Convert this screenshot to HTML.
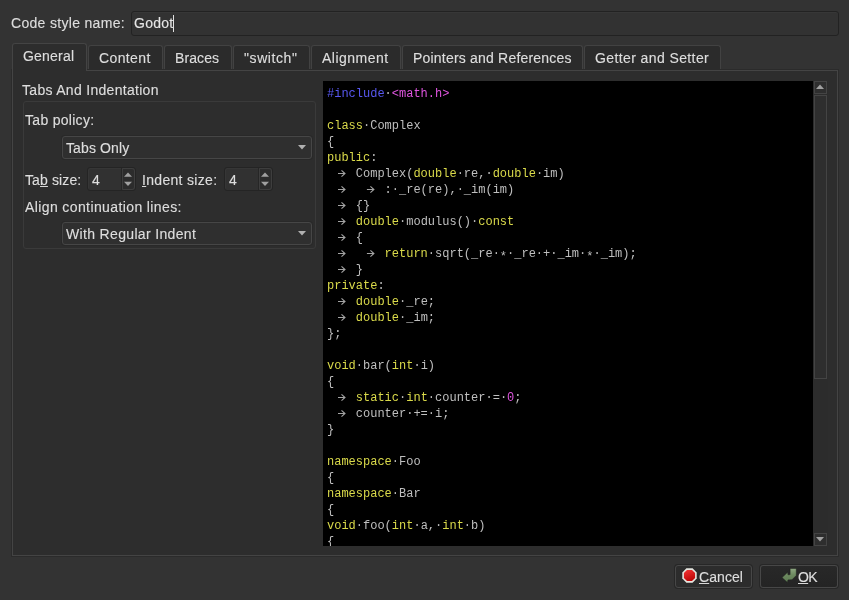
<!DOCTYPE html>
<html><head><meta charset="utf-8">
<style>
html,body{margin:0;padding:0;}
body{width:849px;height:600px;background:#333333;position:relative;overflow:hidden;font-family:"Liberation Sans",sans-serif;font-size:14px;color:#dedede;}
.a{position:absolute;}
.t{position:absolute;white-space:pre;line-height:16px;will-change:transform;-webkit-text-stroke:0.15px #d8d8d8;}
.box{position:absolute;box-sizing:border-box;}
.tab{position:absolute;box-sizing:border-box;top:45px;height:24px;border:1px solid #424242;border-bottom:none;border-radius:3px 3px 0 0;background:#2b2b2b;}
.code{position:absolute;left:327px;top:86px;font-family:"Liberation Mono",monospace;font-size:12px;line-height:16px;white-space:pre;color:#bfbfbf;will-change:transform;}
.k{color:#dada4a;}
.p{color:#5858f0;}
.m{color:#e055e0;}
.d{color:#b8b8b8;}
.ar{color:#a8a8a8;}
.st{position:relative;top:3px;}
u{text-decoration:underline;text-decoration-thickness:1px;text-underline-offset:1px;}
</style></head>
<body>
<div class="t" style="left:11px;top:15.30px;letter-spacing:0.314px;">Code style name:</div>
<div class="box" style="left:131px;top:11px;width:708px;height:25px;border:1px solid #222222;border-radius:3px;background:#323232;box-shadow:inset 0 1px 0 #373737;"></div>
<div class="t" style="left:134px;top:15.30px;letter-spacing:0.238px;color:#e6e6e6;">Godot</div>
<div class="a" style="left:173px;top:15px;width:1px;height:17px;background:#e0e0e0;"></div>
<div class="box" style="left:12px;top:70px;width:826px;height:486px;border:1px solid #444444;background:#2d2d2d;box-shadow:0 0 0 1px #2b2b2b;"></div>
<div class="tab" style="left:88px;width:75px;"></div>
<div class="t" style="left:99px;top:49.80px;letter-spacing:0.381px;">Content</div>
<div class="tab" style="left:164px;width:68px;"></div>
<div class="t" style="left:175px;top:49.80px;letter-spacing:0.096px;">Braces</div>
<div class="tab" style="left:233px;width:77px;"></div>
<div class="t" style="left:244px;top:49.80px;letter-spacing:0.578px;">&quot;switch&quot;</div>
<div class="tab" style="left:311px;width:90px;"></div>
<div class="t" style="left:322px;top:49.80px;letter-spacing:0.483px;">Alignment</div>
<div class="tab" style="left:402px;width:181px;"></div>
<div class="t" style="left:413px;top:49.80px;letter-spacing:0.200px;">Pointers and References</div>
<div class="tab" style="left:584px;width:137px;"></div>
<div class="t" style="left:595px;top:49.80px;letter-spacing:0.396px;">Getter and Setter</div>
<div class="box" style="left:12px;top:43px;width:75px;height:28px;border:1px solid #444444;border-bottom:none;border-radius:3px 3px 0 0;background:#2d2d2d;"></div>
<div class="t" style="left:23px;top:48.30px;letter-spacing:0.204px;">General</div>
<div class="t" style="left:22px;top:81.80px;letter-spacing:0.301px;">Tabs And Indentation</div>
<div class="box" style="left:23px;top:101px;width:293px;height:148px;border:1px solid #3a3a3a;border-radius:3px;"></div>
<div class="t" style="left:25px;top:112.30px;letter-spacing:0.295px;">Tab policy:</div>
<div class="box" style="left:62px;top:136px;width:250px;height:23px;border:1px solid #464646;border-radius:3px;background:#2f2f2f;box-shadow:0 0 0 1px #292929;"></div>
<div class="t" style="left:66px;top:139.90px;letter-spacing:0.116px;">Tabs Only</div>
<svg class="a" style="left:297px;top:144px;" width="10" height="7"><polygon points="1,1 9,1 5,5.6" fill="#b0b0b0"/></svg>
<div class="box" style="left:62px;top:222px;width:250px;height:23px;border:1px solid #464646;border-radius:3px;background:#2f2f2f;box-shadow:0 0 0 1px #292929;"></div>
<div class="t" style="left:66px;top:225.90px;letter-spacing:0.339px;">With Regular Indent</div>
<svg class="a" style="left:297px;top:230px;" width="10" height="7"><polygon points="1,1 9,1 5,5.6" fill="#b0b0b0"/></svg>
<div class="t" style="left:25px;top:171.70px;letter-spacing:0.120px;">Ta<u>b</u> size:</div>
<div class="t" style="left:142px;top:171.70px;letter-spacing:0.315px;"><u>I</u>ndent size:</div>
<div class="t" style="left:25px;top:199.30px;letter-spacing:0.391px;">Align continuation lines:</div>
<div class="box" style="left:87px;top:167px;width:49px;height:24px;border:1px solid #242424;border-radius:3px;background:#313131;box-shadow:inset 1px 1px 0 #363636;"></div>
<div class="box" style="left:121px;top:168px;width:1px;height:22px;background:#262626;"></div>
<div class="box" style="left:122px;top:168px;width:13px;height:22px;border:1px solid #3e3e3e;border-radius:0 3px 3px 0;background:#2c2c2c;"></div>
<svg class="a" style="left:124px;top:172px;" width="9" height="14"><polygon points="0,4.8 8,4.8 4,0.6" fill="#a0a0a0"/><polygon points="0,9.8 8,9.8 4,14" fill="#a0a0a0"/></svg>
<div class="t" style="left:92px;top:171.70px;letter-spacing:0.485px;">4</div>
<div class="box" style="left:224px;top:167px;width:49px;height:24px;border:1px solid #242424;border-radius:3px;background:#313131;box-shadow:inset 1px 1px 0 #363636;"></div>
<div class="box" style="left:258px;top:168px;width:1px;height:22px;background:#262626;"></div>
<div class="box" style="left:259px;top:168px;width:13px;height:22px;border:1px solid #3e3e3e;border-radius:0 3px 3px 0;background:#2c2c2c;"></div>
<svg class="a" style="left:261px;top:172px;" width="9" height="14"><polygon points="0,4.8 8,4.8 4,0.6" fill="#a0a0a0"/><polygon points="0,9.8 8,9.8 4,14" fill="#a0a0a0"/></svg>
<div class="t" style="left:229px;top:171.70px;letter-spacing:0.485px;">4</div>
<div class="box" style="left:323px;top:81px;width:490px;height:465px;background:#000;"></div>
<div class="box" style="left:323px;top:81px;width:490px;height:465px;overflow:hidden;"><div class="code" style="left:4px;top:5px;"><span class="p">#include</span><span class="d">·</span><span class="m">&lt;math.h&gt;</span>

<span class="k">class</span><span class="d">·</span>Complex
{
<span class="k">public</span>:
    Complex(<span class="k">double</span><span class="d">·</span>re,<span class="d">·</span><span class="k">double</span><span class="d">·</span>im)
        :<span class="d">·</span>_re(re),<span class="d">·</span>_im(im)
    {}
    <span class="k">double</span><span class="d">·</span>modulus()<span class="d">·</span><span class="k">const</span>
    {
        <span class="k">return</span><span class="d">·</span>sqrt(_re<span class="d">·</span><span class="st">*</span><span class="d">·</span>_re<span class="d">·</span>+<span class="d">·</span>_im<span class="d">·</span><span class="st">*</span><span class="d">·</span>_im);
    }
<span class="k">private</span>:
    <span class="k">double</span><span class="d">·</span>_re;
    <span class="k">double</span><span class="d">·</span>_im;
};

<span class="k">void</span><span class="d">·</span>bar(<span class="k">int</span><span class="d">·</span>i)
{
    <span class="k">static</span><span class="d">·</span><span class="k">int</span><span class="d">·</span>counter<span class="d">·</span>=<span class="d">·</span><span class="m">0</span>;
    counter<span class="d">·</span>+=<span class="d">·</span>i;
}

<span class="k">namespace</span><span class="d">·</span>Foo
{
<span class="k">namespace</span><span class="d">·</span>Bar
{
<span class="k">void</span><span class="d">·</span>foo(<span class="k">int</span><span class="d">·</span>a,<span class="d">·</span><span class="k">int</span><span class="d">·</span>b)
{
</div></div>
<svg class="a" style="left:0;top:0;" width="849" height="600"><path d="M338.0,173.5 H345.0 M341.5,170.3 L345.0,173.5 L341.5,176.7 M338.0,189.5 H345.0 M341.5,186.3 L345.0,189.5 L341.5,192.7 M366.9,189.5 H373.9 M370.4,186.3 L373.9,189.5 L370.4,192.7 M338.0,205.5 H345.0 M341.5,202.3 L345.0,205.5 L341.5,208.7 M338.0,221.5 H345.0 M341.5,218.3 L345.0,221.5 L341.5,224.7 M338.0,237.5 H345.0 M341.5,234.3 L345.0,237.5 L341.5,240.7 M338.0,253.5 H345.0 M341.5,250.3 L345.0,253.5 L341.5,256.7 M366.9,253.5 H373.9 M370.4,250.3 L373.9,253.5 L370.4,256.7 M338.0,269.5 H345.0 M341.5,266.3 L345.0,269.5 L341.5,272.7 M338.0,301.5 H345.0 M341.5,298.3 L345.0,301.5 L341.5,304.7 M338.0,317.5 H345.0 M341.5,314.3 L345.0,317.5 L341.5,320.7 M338.0,397.5 H345.0 M341.5,394.3 L345.0,397.5 L341.5,400.7 M338.0,413.5 H345.0 M341.5,410.3 L345.0,413.5 L341.5,416.7" stroke="#a4a4a4" stroke-width="1.1" fill="none"/></svg>
<div class="box" style="left:813px;top:81px;width:15px;height:465px;background:#2c2c2c;"></div>
<div class="box" style="left:814px;top:81px;width:13px;height:13px;border:1px solid #444;background:#2e2e2e;"></div>
<svg class="a" style="left:816px;top:84px;" width="9" height="6"><polygon points="0,5 8,5 4,0.5" fill="#a0a0a0"/></svg>
<div class="box" style="left:814px;top:95px;width:13px;height:284px;border:1px solid #444;background:#2e2e2e;"></div>
<div class="box" style="left:814px;top:533px;width:13px;height:13px;border:1px solid #444;background:#2e2e2e;"></div>
<svg class="a" style="left:816px;top:537px;" width="9" height="6"><polygon points="0,0 8,0 4,4.5" fill="#a0a0a0"/></svg>
<div class="box" style="left:675px;top:565px;width:77px;height:23px;border:1px solid #474747;border-radius:3px;background:#2c2c2c;box-shadow:0 0 0 1px #272727;"></div>
<svg class="a" style="left:682px;top:568px;" width="15" height="15"><defs><linearGradient id="rg" x1="0" y1="0" x2="0.4" y2="1"><stop offset="0" stop-color="#f43434"/><stop offset="1" stop-color="#c00808"/></linearGradient></defs><polygon points="4.4,0.3 10.6,0.3 14.7,4.4 14.7,10.6 10.6,14.7 4.4,14.7 0.3,10.6 0.3,4.4" fill="#e6e6e0"/><polygon points="5,1.9 10,1.9 13.1,5 13.1,10 10,13.1 5,13.1 1.9,10 1.9,5" fill="url(#rg)"/></svg>
<div class="box" style="left:760px;top:565px;width:78px;height:23px;border:1px solid #474747;border-radius:3px;background:linear-gradient(#282828,#242424);box-shadow:0 0 0 1px #272727;"></div>
<svg class="a" style="left:782px;top:568px;" width="16" height="16"><defs><linearGradient id="gg" x1="0" y1="0" x2="0" y2="1"><stop offset="0" stop-color="#8fa882"/><stop offset="0.45" stop-color="#6d8a60"/><stop offset="1" stop-color="#5d7a52"/></linearGradient></defs><path d="M8.1,0.4 L14.3,0.4 L14.3,7.5 L10,11.7 L6,11.9 L5.4,14.4 L0,9.6 L5.6,4.3 L6,6.8 L8.1,6.6 Z" fill="url(#gg)" stroke="#1c1c1c" stroke-width="0.5"/></svg>
<div class="t" style="left:699px;top:569.30px;letter-spacing:0.077px;"><u>C</u>ancel</div>
<div class="t" style="left:798px;top:569.30px;letter-spacing:-0.735px;"><u>O</u>K</div>
</body></html>
